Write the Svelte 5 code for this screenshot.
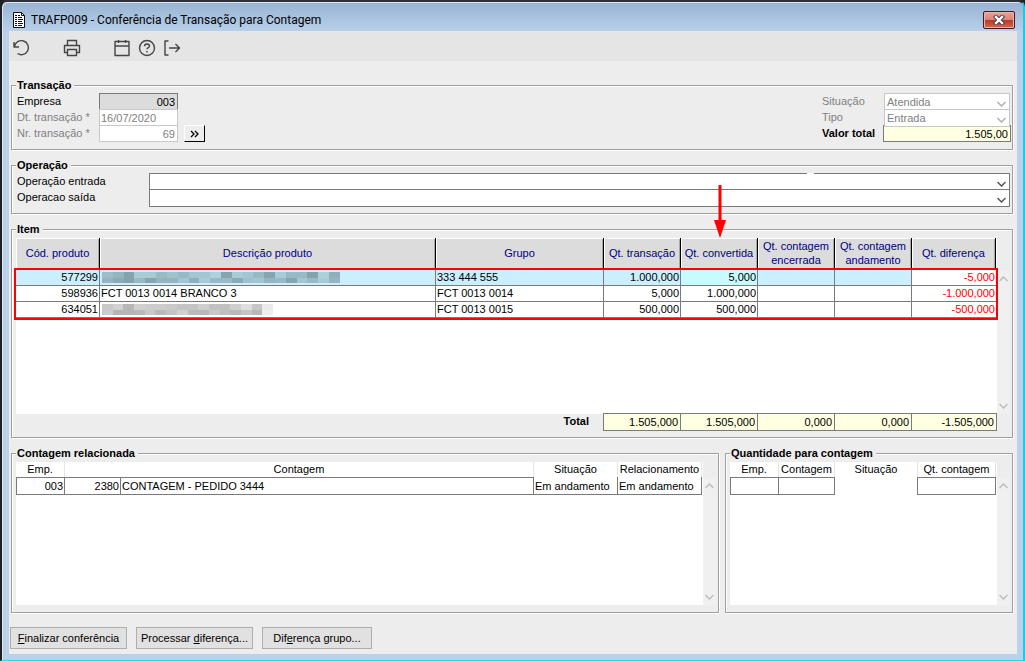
<script lang="ts">
  type Mosaic = { width: number; rows: string[][] };
  type Item = {
    code: string;
    description?: string;
    mosaic?: Mosaic;
    group: string;
    moved: string;
    converted: string;
    difference: string;
  };

  const items: Item[] = [
    {
      code: "577299",
      mosaic: {
        width: 238,
        rows: [
          ["#9dbdc9", "#94b4c0", "#84a3ae", "#a9cad7", "#a9cad7", "#98bac6", "#a0c2ce", "#98bac6", "#a3c5d2", "#a3c5d2", "#acd0dc", "#86a5b0", "#a9cbd8", "#a3c5d2", "#98b9c6", "#86a5b0", "#a9cbd8", "#98bac6", "#98bac6", "#84a3ae", "#acd0dc", "#8fafbb"],
          ["#94b4c0", "#8aaab5", "#84a3ae", "#98bac6", "#86a5b0", "#94b4c0", "#94b4c0", "#a3c5d2", "#8fafbb", "#a9cbd8", "#98bac6", "#98bac6", "#8aaab5", "#a0c2ce", "#a3c5d2", "#94b4c0", "#98bac6", "#86a5b0", "#a3c5d2", "#98bac6", "#a9cbd8", "#94b4c0"],
        ],
      },
      group: "333 444 555",
      moved: "1.000,000",
      converted: "5,000",
      difference: "-5,000",
    },
    {
      code: "598936",
      description: "FCT 0013 0014 BRANCO 3",
      group: "FCT 0013 0014",
      moved: "5,000",
      converted: "1.000,000",
      difference: "-1.000,000",
    },
    {
      code: "634051",
      mosaic: {
        width: 171,
        rows: [
          ["#c8c8c8", "#d2d2d2", "#b6b6b6", "#d0d0d0", "#cdcdcd", "#cdcdcd", "#cacaca", "#c4c4c4", "#c4c4c4", "#cfcfcf", "#c2c2c2", "#c0c0c0", "#cecece", "#dedede", "#c6c6c6", "#eaeaea"],
          ["#cccccc", "#b4b4b4", "#b6b6b6", "#b8b8b8", "#c8c8c8", "#b9b9b9", "#c2c2c2", "#d0d0d0", "#bababa", "#b8b8b8", "#c8c8c8", "#bebebe", "#b8b8b8", "#c4c4c4", "#b8b8b8", "#eeeeee"],
        ],
      },
      group: "FCT 0013 0015",
      moved: "500,000",
      converted: "500,000",
      difference: "-500,000",
    },
  ];

  const totals = ["1.505,000", "1.505,000", "0,000", "0,000", "-1.505,000"];

  let company = $state("003");
  let date = $state("16/07/2020");
  let number = $state("69");
  let totalValue = $state("1.505,00");
</script>

{#snippet chevron(up: boolean)}
  <svg class="chevron" viewBox="0 0 9 6" width="9" height="6" aria-hidden="true">
    <path d={up ? "M0.5 5 4.5 1 8.5 5" : "M0.5 1 4.5 5 8.5 1"} fill="none" stroke="currentColor" stroke-width="1.5" />
  </svg>
{/snippet}

{#snippet scrollbar()}
  <div class="scrollbar">
    {@render chevron(true)}
    {@render chevron(false)}
  </div>
{/snippet}

<div class="window">
  <header class="titlebar">
    <svg width="12" height="16" viewBox="0 0 12 16" aria-hidden="true">
      <path d="M0.5 0.5h8l3 3v12h-11z" fill="#fff" stroke="#111" />
      <path d="M8.5 0.5v3h3" fill="none" stroke="#111" />
      <path d="M2 3.5h2M5 3.5h2M2 5.5h2M5 5.5h4M2 7.5h2M5 7.5h5M2 9.5h2M5 9.5h4M2 11.5h2M5 11.5h5M2 13.5h2M5 13.5h4" stroke="#111" />
    </svg>
    <h1>TRAFP009 - Conferência de Transação para Contagem</h1>
    <button class="close" aria-label="Fechar">
      <svg width="12" height="10" viewBox="0 0 12 10" aria-hidden="true">
        <path d="M3 2 9 8M9 2 3 8" stroke="#4a3a48" stroke-width="4.4" stroke-linecap="square" />
        <path d="M3 2 9 8M9 2 3 8" stroke="#fff" stroke-width="2.4" stroke-linecap="square" />
      </svg>
    </button>
  </header>

  <nav class="toolbar">
    <button aria-label="Atualizar">
      <svg viewBox="0 0 18 18"><path d="M1 3v5h5M1.500 7.500A7 7 0 1 1 4.500 14.500" /></svg>
    </button>
    <button class="apart" aria-label="Imprimir">
      <svg viewBox="0 0 18 18"><path d="M4.500 6.500v-5h9v5M4.500 13.500h-3v-7h15v7h-3M4.500 10.500h9v6h-9z" /></svg>
    </button>
    <button class="apart" aria-label="Calendário">
      <svg viewBox="0 0 18 18"><path d="M2 2.500h14v14H2zM2 7h14M5.500 1v3M12.500 1v3" /></svg>
    </button>
    <button aria-label="Ajuda">
      <svg viewBox="0 0 18 18"><circle cx="9" cy="9" r="7.500" /><path d="M6.500 7.200c0-3 5-3 5 0 0 1.500-2.500 1.500-2.500 3M9 12v1.500" /></svg>
    </button>
    <button aria-label="Sair">
      <svg viewBox="0 0 18 18"><path d="M5.500 2H2v14h3.500M6 9h10.500M12.500 5l4 4-4 4" /></svg>
    </button>
  </nav>

  <main>
    <fieldset class="transaction">
      <legend>Transação</legend>
      <div class="fields left">
        <label for="company">Empresa</label>
        <input id="company" class="readonly" bind:value={company} readonly />
        <label class="muted" for="date">Dt. transação *</label>
        <input id="date" class="muted start" bind:value={date} />
        <label class="muted" for="number">Nr. transação *</label>
        <input id="number" class="muted" bind:value={number} />
        <button class="next" aria-label="Avançar">
          <svg width="9" height="8" viewBox="0 0 9 8"><path d="M1 1l3 3-3 3M5 1l3 3-3 3" fill="none" stroke="#000" stroke-width="1.3" /></svg>
        </button>
      </div>
      <div class="fields right">
        <label class="muted" for="status">Situação</label>
        <div class="select muted">
          <select id="status"><option>Atendida</option></select>
          {@render chevron(false)}
        </div>
        <label class="muted" for="type">Tipo</label>
        <div class="select muted">
          <select id="type"><option>Entrada</option></select>
          {@render chevron(false)}
        </div>
        <label class="strong" for="total">Valor total</label>
        <input id="total" class="sum" bind:value={totalValue} />
      </div>
    </fieldset>

    <fieldset>
      <legend>Operação</legend>
      <div class="fields operation">
        <label for="inbound">Operação entrada</label>
        <div class="select notched">
          <select id="inbound"><option></option></select>
          {@render chevron(false)}
        </div>
        <label for="outbound">Operacao saída</label>
        <div class="select">
          <select id="outbound"><option></option></select>
          {@render chevron(false)}
        </div>
      </div>
    </fieldset>

    <fieldset class="item">
      <legend>Item</legend>
      <div class="sheet">
        <table class="items">
          <colgroup>
            <col class="code" /><col /><col class="group" />
            <col class="qty" /><col class="qty" /><col class="qty" /><col class="qty" /><col class="diff" />
          </colgroup>
          <thead>
            <tr>
              <th>Cód. produto</th>
              <th>Descrição produto</th>
              <th>Grupo</th>
              <th>Qt. transação</th>
              <th class="pointed">
                Qt. convertida
                <svg class="arrow" width="12" height="53" viewBox="0 0 12 53" aria-hidden="true">
                  <path d="M4.500 0h3v35H12L6 53 0 35h4.500z" fill="#f00" />
                </svg>
              </th>
              <th>Qt. contagem encerrada</th>
              <th>Qt. contagem andamento</th>
              <th>Qt. diferença</th>
            </tr>
          </thead>
          <tbody>
            {#each items as item, i}
              <tr class:selected={i === 0}>
                <td class="num">{item.code}</td>
                <td>
                  {#if item.mosaic}
                    <div class="mosaic" style:width="{item.mosaic.width}px">
                      {#each item.mosaic.rows as row}
                        <div>
                          {#each row as shade}
                            <span style:background={shade}></span>
                          {/each}
                        </div>
                      {/each}
                    </div>
                  {:else}
                    {item.description}
                  {/if}
                </td>
                <td>{item.group}</td>
                <td class="num">{item.moved}</td>
                <td class="num current">{item.converted}</td>
                <td></td>
                <td></td>
                <td class="num negative">{item.difference}</td>
              </tr>
            {/each}
          </tbody>
        </table>
        {@render scrollbar()}
      </div>
      <div class="totals">
        <span class="strong">Total</span>
        {#each totals as total}
          <output>{total}</output>
        {/each}
      </div>
    </fieldset>

    <div class="bottom">
      <fieldset class="related">
        <legend>Contagem relacionada</legend>
        <div class="sheet">
          <table class="counts">
            <colgroup><col class="emp" /><col class="id" /><col /><col class="state" /><col class="state" /></colgroup>
            <thead>
              <tr><th>Emp.</th><th colspan="2">Contagem</th><th>Situação</th><th>Relacionamento</th></tr>
            </thead>
            <tbody>
              <tr>
                <td class="num">003</td>
                <td class="num">2380</td>
                <td>CONTAGEM - PEDIDO 3444</td>
                <td class="open">Em andamento</td>
                <td class="open">Em andamento</td>
              </tr>
            </tbody>
          </table>
          {@render scrollbar()}
        </div>
      </fieldset>

      <fieldset class="quantity">
        <legend>Quantidade para contagem</legend>
        <div class="sheet">
          <table class="counts">
            <colgroup><col class="emp" /><col class="id" /><col /><col class="qty" /></colgroup>
            <thead>
              <tr><th>Emp.</th><th>Contagem</th><th>Situação</th><th>Qt. contagem</th></tr>
            </thead>
            <tbody>
              <tr><td></td><td></td><td class="blank"></td><td></td></tr>
            </tbody>
          </table>
          {@render scrollbar()}
        </div>
      </fieldset>
    </div>

    <footer>
      <button><u>F</u>inalizar conferência</button>
      <button>Processar <u>d</u>iferença...</button>
      <button class="short">Dif<u>e</u>rença grupo...</button>
    </footer>
  </main>
</div>

<style>
  :global(body) {
    background: #202020;
  }

  * {
    box-sizing: border-box;
  }

  .window {
    display: flex;
    flex-direction: column;
    min-height: 100vh;
    padding: 0 6px 6px 7px;
    border: solid;
    border-width: 2px 2px 1px 2px;
    border-color: #30303a #20c8e0 #20d8ea #202024;
    border-radius: 7px 7px 0 0;
    background: linear-gradient(#98b2d1, #b9d1ea 30px);
    box-shadow: inset 1px 1px 0 #d8e8f6;
    color: #000;
    font: 11px/16px "Liberation Sans", Arial, sans-serif;
  }

  button,
  input,
  select {
    margin: 0;
    color: inherit;
    font: inherit;
  }

  .titlebar {
    display: flex;
    align-items: center;
    gap: 6px;
    height: 29px;
    padding: 6px 2px 0 4px;
  }

  h1 {
    flex: 1;
    margin: 0;
    font: 12px/20px Roboto, "Open Sans", sans-serif;
  }

  .close {
    display: grid;
    place-items: center;
    width: 32px;
    height: 18px;
    padding: 0;
    border: 1px solid #4a1420;
    border-radius: 2px;
    background: linear-gradient(#e8a497, #d98576 48%, #b93a25 52%, #cf6a50);
    box-shadow: inset 0 0 0 1px #eab5aa;
  }

  .toolbar {
    display: flex;
    align-items: center;
    gap: 7px;
    height: 30px;
    padding: 4px 4px 0;
    background: #e5e5e5;
  }

  .toolbar button {
    display: grid;
    width: 18px;
    height: 18px;
    padding: 0;
    border: 0;
    background: none;
  }

  .toolbar .apart {
    margin-left: 25px;
  }

  .toolbar svg {
    fill: none;
    stroke: #454545;
    stroke-width: 1.4;
    stroke-linejoin: round;
  }

  main {
    display: flex;
    flex: 1;
    flex-direction: column;
    gap: 8px;
    padding: 17px 4px 5px 2px;
    background: #ededed;
  }

  fieldset {
    min-width: 0;
    margin: 0;
    padding: 0 1px 8px 5px;
    border: 1px solid #a0a0a0;
    box-shadow: 1px 1px 0 #fff, inset 1px 1px 0 #fff;
  }

  legend {
    margin-left: -1px;
    padding: 0 3px 0 1px;
    background: #ededed;
    font-weight: bold;
    line-height: 14px;
  }

  .strong {
    font-weight: bold;
  }

  .muted {
    color: #808080;
  }

  .transaction {
    display: flex;
    justify-content: space-between;
  }

  .fields {
    display: grid;
    grid-auto-rows: 16px;
    padding-top: 1px;
  }

  .left {
    grid-template-columns: 82px 79px 27px;
  }

  .left label {
    grid-column: 1;
  }

  .right {
    grid-template-columns: 61px 128px;
  }

  .operation {
    grid-template-columns: 132px 1fr;
    padding-right: 1px;
  }

  input {
    width: 100%;
    height: 17px;
    padding: 1px 2px 0;
    border: 1px solid #c8c8c8;
    border-radius: 0;
    background: #fff;
    text-align: right;
  }

  .readonly {
    border-color: #7a7a7a;
    background: #dcdcdc;
  }

  .start {
    padding-left: 1px;
    text-align: left;
  }

  .sum {
    border-color: #7a7a7a;
    background: #ffffe1;
  }

  .next {
    display: grid;
    place-items: center;
    width: 21px;
    height: 17px;
    margin-left: 6px;
    padding: 0;
    border: 1px solid;
    border-color: #fff #000 #000 #fff;
    background: #ededed;
  }

  .select {
    display: grid;
    position: relative;
    height: 17px;
  }

  .select select {
    grid-area: 1 / 1;
    padding: 0 2px;
    border: 1px solid #7a7a7a;
    border-radius: 0;
    background: #fff;
    appearance: none;
  }

  .select.muted select {
    border-color: #c8c8c8;
  }

  .select .chevron {
    grid-area: 1 / 1;
    place-self: center end;
    margin: 3px 4px 0 0;
    color: #555;
    pointer-events: none;
  }

  .select.muted {
    margin: 0 1px;
  }

  .select.muted .chevron {
    color: #b0b0b0;
  }

  .notched::after {
    content: "";
    position: absolute;
    top: 0;
    right: 196px;
    width: 7px;
    height: 1px;
    background: #fff;
  }

  .sheet {
    display: flex;
    flex: 1;
    align-items: flex-start;
    margin-top: 2px;
    background: linear-gradient(#fff, #fff) no-repeat 0 0 / calc(100% - 13px) 100%;
  }

  .scrollbar {
    display: flex;
    flex-direction: column;
    align-items: center;
    align-self: stretch;
    justify-content: space-between;
    width: 13px;
    padding: 5px 1px 5px 0;
    background: #f0f0f0;
    color: #bdbdbd;
  }

  table {
    flex: 1;
    width: 100%;
    margin-right: 1px;
    border-spacing: 0;
    table-layout: fixed;
  }

  th {
    padding: 0;
    font-weight: normal;
  }

  td {
    padding: 0 1px;
    white-space: nowrap;
  }

  .num {
    text-align: right;
  }

  .item {
    display: flex;
    flex-direction: column;
    padding: 0 2px 6px 4px;
  }

  .item legend,
  .bottom legend {
    margin-left: 0;
  }

  .item .sheet {
    min-height: 176px;
  }

  .item .scrollbar {
    margin-top: 33px;
  }

  .items .code {
    width: 84px;
  }

  .items .group {
    width: 168px;
  }

  .items .qty {
    width: 77px;
  }

  .items .diff {
    width: 84px;
  }

  .items th {
    height: 32px;
    padding-bottom: 2px;
    border-right: 1px solid #000;
    background: #dcdcdc;
    box-shadow: inset 1px 1px 0 #fff, inset -1px 0 0 #a8a8a8;
    color: #000080;
    line-height: 14px;
  }

  .items .pointed {
    position: relative;
  }

  .arrow {
    position: absolute;
    bottom: 32px;
    left: 50%;
    margin-left: -5px;
  }

  .items tbody {
    position: relative;
    outline: 2px solid #f00;
  }

  .items td {
    height: 16px;
    border-right: 1px solid #7a7a7a;
    border-bottom: 1px solid #7a7a7a;
    line-height: 15px;
  }

  .items .selected td {
    background: #cbefff;
  }

  .items .selected .current {
    background: #c8fbff;
  }

  .items .negative,
  .items .selected .negative {
    border-right: 0;
    background: #fff;
    color: #f00;
  }

  .mosaic {
    margin-left: 1px;
  }

  .mosaic div {
    display: flex;
    height: 5px;
  }

  .mosaic div:first-child {
    height: 6px;
  }

  .mosaic span {
    flex: 1;
  }

  .totals {
    display: grid;
    grid-template-columns: 1fr repeat(4, 77px) 86px;
    margin: -1px 13px 0 0;
  }

  .totals .strong {
    padding-right: 14px;
    text-align: right;
  }

  output {
    height: 18px;
    padding: 0 2px;
    border: solid #7a7a7a;
    border-width: 1px 0 1px 1px;
    background: #ffffe1;
    text-align: right;
  }

  output:last-child {
    border-right-width: 1px;
  }

  .bottom {
    display: flex;
    flex: 1;
    gap: 6px;
  }

  .bottom fieldset {
    display: flex;
    flex-direction: column;
    padding: 0 2px 7px 4px;
  }

  .related {
    flex: 1;
  }

  .quantity {
    width: 288px;
  }

  .bottom .sheet {
    min-height: 140px;
  }

  .bottom .scrollbar {
    margin-top: 16px;
  }

  .counts .emp {
    width: 49px;
  }

  .counts .id {
    width: 56px;
  }

  .counts .state {
    width: 84px;
  }

  .counts .qty {
    width: 78px;
  }

  .counts th {
    height: 15px;
    border-right: 1px solid #e4e4e4;
    line-height: 15px;
  }

  .counts td {
    height: 18px;
    border: solid #7a7a7a;
    border-width: 1px 1px 1px 0;
  }

  .counts td:first-child {
    border-left-width: 1px;
  }

  .counts .open {
    border-top-width: 0;
  }

  .counts .blank {
    border-top-width: 0;
    border-bottom-width: 0;
  }

  footer {
    display: flex;
    gap: 9px;
    margin-top: 6px;
    margin-left: -1px;
  }

  footer button {
    width: 117px;
    height: 22px;
    padding: 0;
    border: 1px solid #adadad;
    background: #e1e1e1;
  }

  footer .short {
    width: 110px;
  }
</style>
